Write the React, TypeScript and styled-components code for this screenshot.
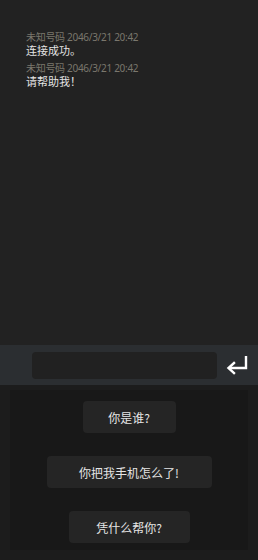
import React from "react";
import styled, { createGlobalStyle } from "styled-components";

const GlobalStyle = createGlobalStyle`
  html, body {
    margin: 0;
    padding: 0;
    background: #222222;
  }
  body {
    font-family: "Noto Sans", "Noto Sans CJK SC", sans-serif;
  }
`;

const Screen = styled.div`
  width: 258px;
  height: 560px;
  display: flex;
  flex-direction: column;
  overflow: hidden;
`;

const ChatLog = styled.div`
  height: 345px;
  background: #222222;
  padding: 31px 26px 0;
  box-sizing: border-box;
  display: flex;
  flex-direction: column;
  gap: 4px;
`;

const Message = styled.div`
  display: flex;
  flex-direction: column;
`;

const Meta = styled.div`
  font-size: 10px;
  line-height: 13px;
  height: 13px;
  letter-spacing: -0.3px;
  color: #7a776d;
`;

const Body = styled.div`
  font-size: 11px;
  line-height: 14px;
  height: 14px;
  color: #e4e4e4;
`;

const InputBar = styled.div`
  height: 40px;
  background: #2b2e31;
  display: flex;
  align-items: center;
  padding: 0 8px 0 32px;
  gap: 7px;
`;

const TextBox = styled.div`
  width: 186px;
  height: 27px;
  background: #212121;
  border-radius: 4px;
`;

const SendButton = styled.button`
  border: none;
  background: none;
  padding: 0;
  width: 26px;
  height: 26px;
  display: flex;
  align-items: center;
  justify-content: center;
`;

const ReplyArea = styled.div`
  flex: 1;
  background: #1c1c1c;
  padding: 5px 10px 10px;
  display: flex;
`;

const ReplyPanel = styled.div`
  flex: 1;
  background: #181818;
  display: flex;
  flex-direction: column;
  align-items: center;
  padding-top: 11px;
  gap: 23px;
`;

const Choice = styled.button<{ $width: number }>`
  width: ${(p) => p.$width}px;
  height: 32px;
  border: none;
  border-radius: 4px;
  background: #252525;
  color: #e6e6e6;
  font-family: "Noto Sans CJK SC", sans-serif;
  font-size: 12px;
  padding: 0;
`;

const messages = [
  { meta: "未知号码 2046/3/21 20:42", body: "连接成功。" },
  { meta: "未知号码 2046/3/21 20:42", body: "请帮助我！" },
];

const choices = [
  { text: "你是谁?", width: 93 },
  { text: "你把我手机怎么了!", width: 165 },
  { text: "凭什么帮你?", width: 121 },
];

export default function App() {
  return (
    <Screen>
      <GlobalStyle />
      <ChatLog>
        {messages.map((m, i) => (
          <Message key={i}>
            <Meta>{m.meta}</Meta>
            <Body>{m.body}</Body>
          </Message>
        ))}
      </ChatLog>
      <InputBar>
        <TextBox />
        <SendButton>
          <svg width="24" height="22" viewBox="0 0 24 22" fill="none">
            <path
              d="M21 2 V14 H4"
              stroke="#ffffff"
              strokeWidth="2.4"
              strokeLinejoin="miter"
            />
            <path
              d="M9 9 L3.5 14 L9 19"
              stroke="#ffffff"
              strokeWidth="2.4"
              strokeLinecap="square"
            />
          </svg>
        </SendButton>
      </InputBar>
      <ReplyArea>
        <ReplyPanel>
          {choices.map((c) => (
            <Choice key={c.text} $width={c.width}>
              {c.text}
            </Choice>
          ))}
        </ReplyPanel>
      </ReplyArea>
    </Screen>
  );
}
